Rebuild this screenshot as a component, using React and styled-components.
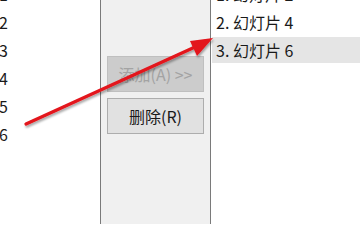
import styled, { createGlobalStyle } from "styled-components";

const GlobalStyle = createGlobalStyle`
    body {
        margin: 0;
        font-family: "Noto Sans CJK SC", "Noto Sans", sans-serif;
        font-size: 16px;
        color: #1a1a1a;
    }
`;

const leftItems = ["1", "2", "3", "4", "5", "6"];
const rightItems = ["1. 幻灯片 2", "2. 幻灯片 4", "3. 幻灯片 6"];

const Arrow = () => (
    <ArrowLayer width="360" height="224" viewBox="0 0 360 224">
        <defs>
            <filter id="shadow" x="-10%" y="-20%" width="130%" height="160%">
                <feDropShadow dx="1" dy="2" stdDeviation="1.2" floodColor="#000" floodOpacity="0.35" />
            </filter>
        </defs>
        <g filter="url(#shadow)">
            <line x1="26" y1="124" x2="195" y2="47" stroke="#e3141b" strokeWidth="3.2" strokeLinecap="round" />
            <polygon points="213,38 190,41 197,56" fill="#e3141b" />
        </g>
    </ArrowLayer>
);

export default function App() {
    return (
        <>
            <GlobalStyle />
            <Frame>
                <LeftList>
                    <Items>
                        {leftItems.map((item) => (
                            <Item key={item} $indent={-1}>{item}</Item>
                        ))}
                    </Items>
                </LeftList>
                <Middle>
                    <Button disabled>添加(A) &gt;&gt;</Button>
                    <Button>删除(R)</Button>
                </Middle>
                <RightList>
                    <Items>
                        {rightItems.map((item, i) => (
                            <Item key={item} $indent={4} $selected={i === 2}>{item}</Item>
                        ))}
                    </Items>
                </RightList>
                <Arrow />
            </Frame>
        </>
    );
}

const Frame = styled.div`
    position: relative;
    display: flex;
    width: 360px;
    height: 224px;
    overflow: hidden;
`;

const LeftList = styled.div`
    width: 100px;
    background: #ffffff;
    border-right: 1px solid #7a7a7a;
    overflow: hidden;
`;

const RightList = styled.div`
    flex: 1;
    background: #ffffff;
    border-left: 1px solid #7a7a7a;
    padding-left: 1px;
    overflow: hidden;
`;

const Items = styled.div`
    margin-top: -19px;
`;

const Item = styled.div`
    height: 26px;
    line-height: 26px;
    margin-bottom: 2px;
    padding-left: ${(p) => Math.max(p.$indent, 0)}px;
    margin-left: ${(p) => Math.min(p.$indent, 0)}px;
    white-space: nowrap;
    background: ${(p) => (p.$selected ? "#e5e5e5" : "transparent")};
`;

const Middle = styled.div`
    width: 109px;
    background: #f0f0f0;
    display: flex;
    flex-direction: column;
    gap: 6px;
    padding: 56px 0 0 6px;
    box-sizing: border-box;
`;

const Button = styled.button`
    width: 97px;
    height: 36px;
    padding: 0;
    font-family: inherit;
    font-size: 16px;
    background: #e1e1e1;
    border: 1px solid #adadad;
    color: #1a1a1a;

    &:disabled {
        background: #cccccc;
        border-color: #bfbfbf;
        color: #a3a3a3;
    }
`;

const ArrowLayer = styled.svg`
    position: absolute;
    left: 0;
    top: 0;
    pointer-events: none;
`;
